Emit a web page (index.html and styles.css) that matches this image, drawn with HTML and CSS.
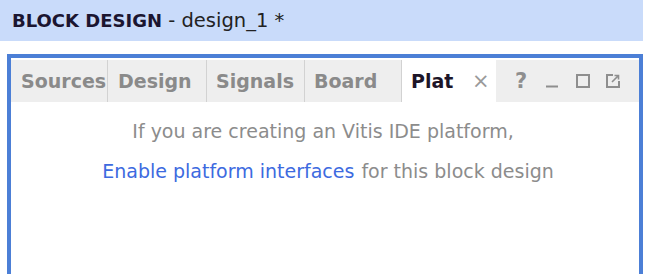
FILE: index.html
```html
<!DOCTYPE html>
<html>
<head>
<meta charset="utf-8">
<link rel="stylesheet" href="styles.css">
</head>
<body>
<div class="header"><span class="title">BLOCK DESIGN</span><span class="sub"> - design_1 *</span></div>
<div class="panel">
  <div class="tabbar">
    <div class="tab">Sources</div>
    <div class="tab">Design</div>
    <div class="tab">Signals</div>
    <div class="tab">Board</div>
    <div class="tab active"><span class="tabname">Plat</span><span class="close">×</span></div>
    <div class="tools">
      <span class="tool q">?</span>
      <svg class="tool" width="14" height="14" viewBox="0 0 14 14"><rect x="0" y="11.5" width="12" height="2" fill="#8e8e8e"/></svg>
      <svg class="tool" width="14" height="14" viewBox="0 0 14 14"><rect x="1" y="1" width="12" height="12" fill="none" stroke="#8e8e8e" stroke-width="2"/></svg>
      <svg class="tool" width="14" height="14" viewBox="0 0 14 14"><path d="M7 1H1V13H13V7" fill="none" stroke="#8e8e8e" stroke-width="2"/><path d="M6 8L12 2M8.5 1.5H12.5V5.5" fill="none" stroke="#8e8e8e" stroke-width="1.6"/></svg>
    </div>
  </div>
  <div class="content">
    <p class="line">If you are creating an Vitis IDE platform,</p>
    <p class="line second"><a class="link">Enable platform interfaces</a> for this block design</p>
  </div>
</div>
</body>
</html>
```
FILE: styles.css
```css
html, body {
  margin: 0;
  padding: 0;
  background: #ffffff;
  font-family: "DejaVu Sans", sans-serif;
}
.header {
  width: 643px;
  height: 41px;
  background: #c9dbfa;
  display: flex;
  align-items: center;
  padding-left: 12px;
  box-sizing: border-box;
  font-size: 19.5px;
}
.title {
  font-weight: bold;
  color: #1b1530;
  font-size: 18px;
}
.sub {
  color: #222;
  white-space: pre;
}
.panel {
  margin: 13px 0 0 7px;
  width: 636px;
  height: 220px;
  border: 4px solid #4c7fd6;
  border-bottom: none;
  box-sizing: border-box;
}
.tabbar {
  display: flex;
  height: 42px;
  background: #eeeeee;
  margin-top: 2px;
  align-items: stretch;
}
.tab {
  width: 97px;
  box-sizing: border-box;
  padding-left: 10px;
  display: flex;
  align-items: center;
  font-weight: bold;
  font-size: 19px;
  color: #8a8a8a;
  overflow: hidden;
  white-space: nowrap;
  border-right: 1px solid #d2d2d2;
}
.tab:nth-child(2) { width: 99px; padding-left: 10px; }
.tab:nth-child(3) { width: 98px; padding-left: 9px; }
.tab:nth-child(4) { width: 97px; padding-left: 9px; }
.tab.active {
  width: 94px;
  background: #ffffff;
  color: #1d1528;
  border-right: none;
  padding-left: 9px;
}
.tabname { width: 61px; }
.close {
  font-weight: normal;
  color: #9a9a9a;
  font-size: 21px;
}
.tools {
  display: flex;
  align-items: center;
  gap: 16px;
  padding-left: 19px;
}
.tool.q {
  font-weight: bold;
  color: #8e8e8e;
  font-size: 21px;
  width: 15px;
}
.content {
  display: flex;
  flex-direction: column;
  align-items: center;
  padding-top: 17px;
  padding-right: 4px;
}
.line {
  margin: 0 0 16px 0;
  font-size: 19px;
  color: #8c8c8c;
  line-height: 24px;
  white-space: nowrap;
}
.line.second {
  padding-left: 10px;
}
.link {
  color: #3d6ae0;
  margin-right: 1px;
}
```
